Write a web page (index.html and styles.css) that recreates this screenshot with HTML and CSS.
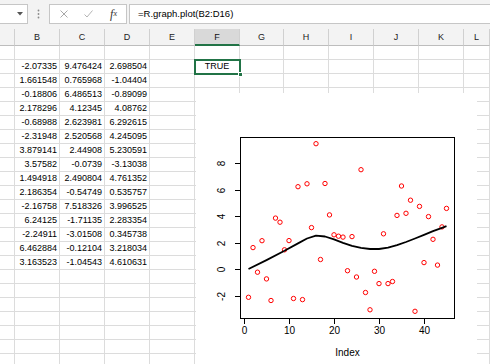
FILE: index.html
```html
<!DOCTYPE html>
<html lang="en">
<head>
    <meta charset="UTF-8">
    <title>R.graph.plot</title>
    <link rel="stylesheet" href="styles.css">
</head>
<body>
    <div class="formula-bar">
        <div class="name-box">
            <svg width="6" height="4" viewBox="0 0 6 4"><polygon points="0,0 6,0 3,3.5" fill="#555"/></svg>
        </div>
        <div class="dots">
            <svg width="3" height="10" viewBox="0 0 3 10"><circle cx="1.5" cy="1.5" r="0.9" fill="#8a8a8a"/><circle cx="1.5" cy="5" r="0.9" fill="#8a8a8a"/><circle cx="1.5" cy="8.5" r="0.9" fill="#8a8a8a"/></svg>
        </div>
        <div class="fx-box">
            <span class="btn"><svg width="8" height="8" viewBox="0 0 8 8"><path d="M0.5 0.5L7.5 7.5M7.5 0.5L0.5 7.5" stroke="#a8a8a8" stroke-width="1"/></svg></span>
            <span class="btn"><svg width="9" height="8" viewBox="0 0 9 8"><path d="M0.5 4.5L3 7L8.5 0.5" stroke="#b4b4b4" stroke-width="1" fill="none"/></svg></span>
            <span class="btn fx"><i>f</i><sub>x</sub></span>
        </div>
        <div class="formula">=R.graph.plot(B2:D16)</div>
    </div>

    <div class="sheet">
        <div class="hd"></div><div class="hd">B</div><div class="hd">C</div><div class="hd">D</div><div class="hd">E</div><div class="hd sel">F</div><div class="hd">G</div><div class="hd">H</div><div class="hd">I</div><div class="hd">J</div><div class="hd">K</div><div class="hd">L</div>
        <!-- row 1 -->
        <div></div><div></div><div></div><div></div><div></div><div></div><div></div><div></div><div></div><div></div><div></div><div></div>
        <!-- rows 2-16: data -->
        <div></div><div class="num">-2.07335</div><div class="num">9.476424</div><div class="num">2.698504</div><div></div><div class="bool active">TRUE</div><div></div><div></div><div></div><div></div><div></div><div></div>
        <div></div><div class="num">1.661548</div><div class="num">0.765968</div><div class="num">-1.04404</div><div></div><div></div><div></div><div></div><div></div><div></div><div></div><div></div>
        <div></div><div class="num">-0.18806</div><div class="num">6.486513</div><div class="num">-0.89099</div><div></div><div></div><div></div><div></div><div></div><div></div><div></div><div></div>
        <div></div><div class="num">2.178296</div><div class="num">4.12345</div><div class="num">4.08762</div><div></div><div></div><div></div><div></div><div></div><div></div><div></div><div></div>
        <div></div><div class="num">-0.68988</div><div class="num">2.623981</div><div class="num">6.292615</div><div></div><div></div><div></div><div></div><div></div><div></div><div></div><div></div>
        <div></div><div class="num">-2.31948</div><div class="num">2.520568</div><div class="num">4.245095</div><div></div><div></div><div></div><div></div><div></div><div></div><div></div><div></div>
        <div></div><div class="num">3.879141</div><div class="num">2.44908</div><div class="num">5.230591</div><div></div><div></div><div></div><div></div><div></div><div></div><div></div><div></div>
        <div></div><div class="num">3.57582</div><div class="num">-0.0739</div><div class="num">-3.13038</div><div></div><div></div><div></div><div></div><div></div><div></div><div></div><div></div>
        <div></div><div class="num">1.494918</div><div class="num">2.490804</div><div class="num">4.761352</div><div></div><div></div><div></div><div></div><div></div><div></div><div></div><div></div>
        <div></div><div class="num">2.186354</div><div class="num">-0.54749</div><div class="num">0.535757</div><div></div><div></div><div></div><div></div><div></div><div></div><div></div><div></div>
        <div></div><div class="num">-2.16758</div><div class="num">7.518326</div><div class="num">3.996525</div><div></div><div></div><div></div><div></div><div></div><div></div><div></div><div></div>
        <div></div><div class="num">6.24125</div><div class="num">-1.71135</div><div class="num">2.283354</div><div></div><div></div><div></div><div></div><div></div><div></div><div></div><div></div>
        <div></div><div class="num">-2.24911</div><div class="num">-3.01508</div><div class="num">0.345738</div><div></div><div></div><div></div><div></div><div></div><div></div><div></div><div></div>
        <div></div><div class="num">6.462884</div><div class="num">-0.12104</div><div class="num">3.218034</div><div></div><div></div><div></div><div></div><div></div><div></div><div></div><div></div>
        <div></div><div class="num">3.163523</div><div class="num">-1.04543</div><div class="num">4.610631</div><div></div><div></div><div></div><div></div><div></div><div></div><div></div><div></div>
        <!-- empty rows -->
        <div></div><div></div><div></div><div></div><div></div><div></div><div></div><div></div><div></div><div></div><div></div><div></div>
        <div></div><div></div><div></div><div></div><div></div><div></div><div></div><div></div><div></div><div></div><div></div><div></div>
        <div></div><div></div><div></div><div></div><div></div><div></div><div></div><div></div><div></div><div></div><div></div><div></div>
        <div></div><div></div><div></div><div></div><div></div><div></div><div></div><div></div><div></div><div></div><div></div><div></div>
        <div></div><div></div><div></div><div></div><div></div><div></div><div></div><div></div><div></div><div></div><div></div><div></div>
        <div></div><div></div><div></div><div></div><div></div><div></div><div></div><div></div><div></div><div></div><div></div><div></div>
        <div></div><div></div><div></div><div></div><div></div><div></div><div></div><div></div><div></div><div></div><div></div><div></div>
    </div>

    <!-- picture returned by R, floating over the sheet -->
    <div class="chart">
        <svg width="281" height="271" viewBox="196 93 281 271">
            <g fill="none" stroke="#ff0000" stroke-width="1">
                <circle cx="248.5" cy="297.3" r="2.2"/><circle cx="253" cy="247.6" r="2.2"/><circle cx="257.5" cy="272.2" r="2.2"/>
                <circle cx="262" cy="240.7" r="2.2"/><circle cx="266.5" cy="278.9" r="2.2"/><circle cx="271" cy="300.5" r="2.2"/>
                <circle cx="275.5" cy="218.1" r="2.2"/><circle cx="280" cy="222.2" r="2.2"/><circle cx="284.5" cy="249.8" r="2.2"/>
                <circle cx="289" cy="240.6" r="2.2"/><circle cx="293.5" cy="298.5" r="2.2"/><circle cx="298" cy="186.7" r="2.2"/>
                <circle cx="302.5" cy="299.6" r="2.2"/><circle cx="307" cy="183.8" r="2.2"/><circle cx="311.5" cy="227.6" r="2.2"/>
                <circle cx="316" cy="143.7" r="2.2"/><circle cx="320.5" cy="259.5" r="2.2"/><circle cx="325" cy="183.5" r="2.2"/>
                <circle cx="329.5" cy="214.9" r="2.2"/><circle cx="334" cy="234.8" r="2.2"/><circle cx="338.5" cy="236.2" r="2.2"/>
                <circle cx="343" cy="237.1" r="2.2"/><circle cx="347.5" cy="270.7" r="2.2"/><circle cx="352" cy="236.6" r="2.2"/>
                <circle cx="356.5" cy="277" r="2.2"/><circle cx="361" cy="169.7" r="2.2"/><circle cx="365.5" cy="292.5" r="2.2"/>
                <circle cx="370" cy="309.8" r="2.2"/><circle cx="374.5" cy="271.3" r="2.2"/><circle cx="379" cy="283.6" r="2.2"/>
                <circle cx="383.5" cy="233.8" r="2.2"/><circle cx="388" cy="283.6" r="2.2"/><circle cx="392.5" cy="281.5" r="2.2"/>
                <circle cx="397" cy="215.4" r="2.2"/><circle cx="401.5" cy="186" r="2.2"/><circle cx="406" cy="213.3" r="2.2"/>
                <circle cx="410.5" cy="200.2" r="2.2"/><circle cx="415" cy="311.3" r="2.2"/><circle cx="419.5" cy="206.4" r="2.2"/>
                <circle cx="424" cy="262.6" r="2.2"/><circle cx="428.5" cy="216.6" r="2.2"/><circle cx="433" cy="239.3" r="2.2"/>
                <circle cx="437.5" cy="265.1" r="2.2"/><circle cx="442" cy="226.9" r="2.2"/><circle cx="446.5" cy="208.4" r="2.2"/>
            </g>
            <polyline fill="none" stroke="#000" stroke-width="1.8" stroke-linejoin="round"
                points="248.5,269 266.5,260.1 284.5,250.8 298,243.4 307,238.5 316,235.7 325,236.5 334,239.4 343,242.8 352,245.8 361,247.9 370,249 379,249 388,247.6 397,245.1 406,242 415,238.5 424,234.9 433,231.1 442,227.8 446.5,226.2"/>
            <rect x="240.5" y="137.5" width="214" height="181" fill="none" stroke="#000"/>
            <path d="M235 163.5H241M235 190.5H241M235 216.5H241M235 243.5H241M235 269.5H241M235 296.5H241
                     M244.5 318V324M289.5 318V324M334.5 318V324M379.5 318V324M424.5 318V324" stroke="#000" fill="none"/>
            <g class="ticks">
                <text transform="translate(225 296.5) rotate(-90)">-2</text>
                <text transform="translate(225 269.5) rotate(-90)">0</text>
                <text transform="translate(225 243.5) rotate(-90)">2</text>
                <text transform="translate(225 216.5) rotate(-90)">4</text>
                <text transform="translate(225 190.5) rotate(-90)">6</text>
                <text transform="translate(225 163.5) rotate(-90)">8</text>
                <text x="244.5" y="334">0</text>
                <text x="289.5" y="334">10</text>
                <text x="334.5" y="334">20</text>
                <text x="379.5" y="334">30</text>
                <text x="424.5" y="334">40</text>
                <text x="347.5" y="356">Index</text>
            </g>
        </svg>
    </div>
</body>
</html>
```

FILE: styles.css
```css
:root {
    --bar-bg: #f3f3f3;
    --box-border: #c6c6c6;
    --grid-line: #dcdcdc;
    --header-line: #d0d0d0;
    --excel-green: #217346;
}

body {
    margin: 0;
    width: 490px;
    height: 364px;
    overflow: hidden;
    font-family: "Liberation Sans", Arial, sans-serif;
    background-color: #fff;
    color: #000;
}

/* formula bar */

.formula-bar {
    display: flex;
    align-items: flex-start;
    height: 29px;
    padding-top: 4px;
    box-sizing: border-box;
    background-color: var(--bar-bg);
}

.name-box {
    width: 28px;
    height: 20px;
    box-sizing: border-box;
    background-color: #fff;
    border: 1px solid var(--box-border);
    border-left: none;
    display: flex;
    align-items: center;
    justify-content: flex-end;
    padding-right: 4px;
}

.dots {
    width: 21px;
    height: 20px;
    display: flex;
    align-items: center;
    justify-content: center;
}

.fx-box {
    width: 78px;
    height: 20px;
    box-sizing: border-box;
    background-color: #fff;
    border: 1px solid var(--box-border);
    display: flex;
    padding-left: 1px;
}

.btn {
    width: 25px;
    display: flex;
    align-items: center;
    justify-content: center;
}

.fx {
    font-family: "Liberation Serif", serif;
    font-size: 12px;
    color: #333;
    line-height: 18px;
}

.fx sub {
    font-size: 8px;
    font-style: italic;
    vertical-align: -1px;
}

.formula {
    flex: 1;
    height: 20px;
    margin-left: 2px;
    box-sizing: border-box;
    background-color: #fff;
    border: 1px solid var(--box-border);
    border-right: none;
    padding-left: 8px;
    font-size: 9.5px;
    line-height: 18px;
}

/* worksheet */

.sheet {
    display: grid;
    grid-template-columns: 15px repeat(5, 45px) 44px repeat(4, 45px) 1fr;
    grid-template-rows: 17px;
    grid-auto-rows: 14px;
    font-size: 9px;
}

.sheet > div {
    box-sizing: border-box;
    border-right: 1px solid var(--grid-line);
    border-bottom: 1px solid var(--grid-line);
    line-height: 13px;
    white-space: nowrap;
    overflow: visible;
}

.sheet > .hd {
    background-color: var(--bar-bg);
    border-right-color: var(--header-line);
    border-bottom-color: #bdbdbd;
    text-align: center;
    line-height: 16px;
    color: #222;
}

.sheet > .hd.sel {
    background-color: #d9d9d9;
    border-bottom: 2px solid var(--excel-green);
    color: #111;
}

.num {
    text-align: right;
    padding-right: 2px;
}

.bool {
    text-align: center;
}

.sheet > .active {
    position: relative;
    outline: 2px solid var(--excel-green);
    outline-offset: -1px;
}

.active::after {
    content: "";
    position: absolute;
    right: -4px;
    bottom: -4px;
    width: 5px;
    height: 5px;
    background-color: var(--excel-green);
    border: 1px solid #fff;
    box-sizing: border-box;
}

/* R plot image */

.chart {
    position: absolute;
    left: 196px;
    top: 93px;
    width: 281px;
    height: 271px;
    background-color: #fff;
}

.chart svg {
    display: block;
}

.ticks text {
    font-family: "Liberation Sans", Arial, sans-serif;
    font-size: 10px;
    text-anchor: middle;
    fill: #000;
}
```
